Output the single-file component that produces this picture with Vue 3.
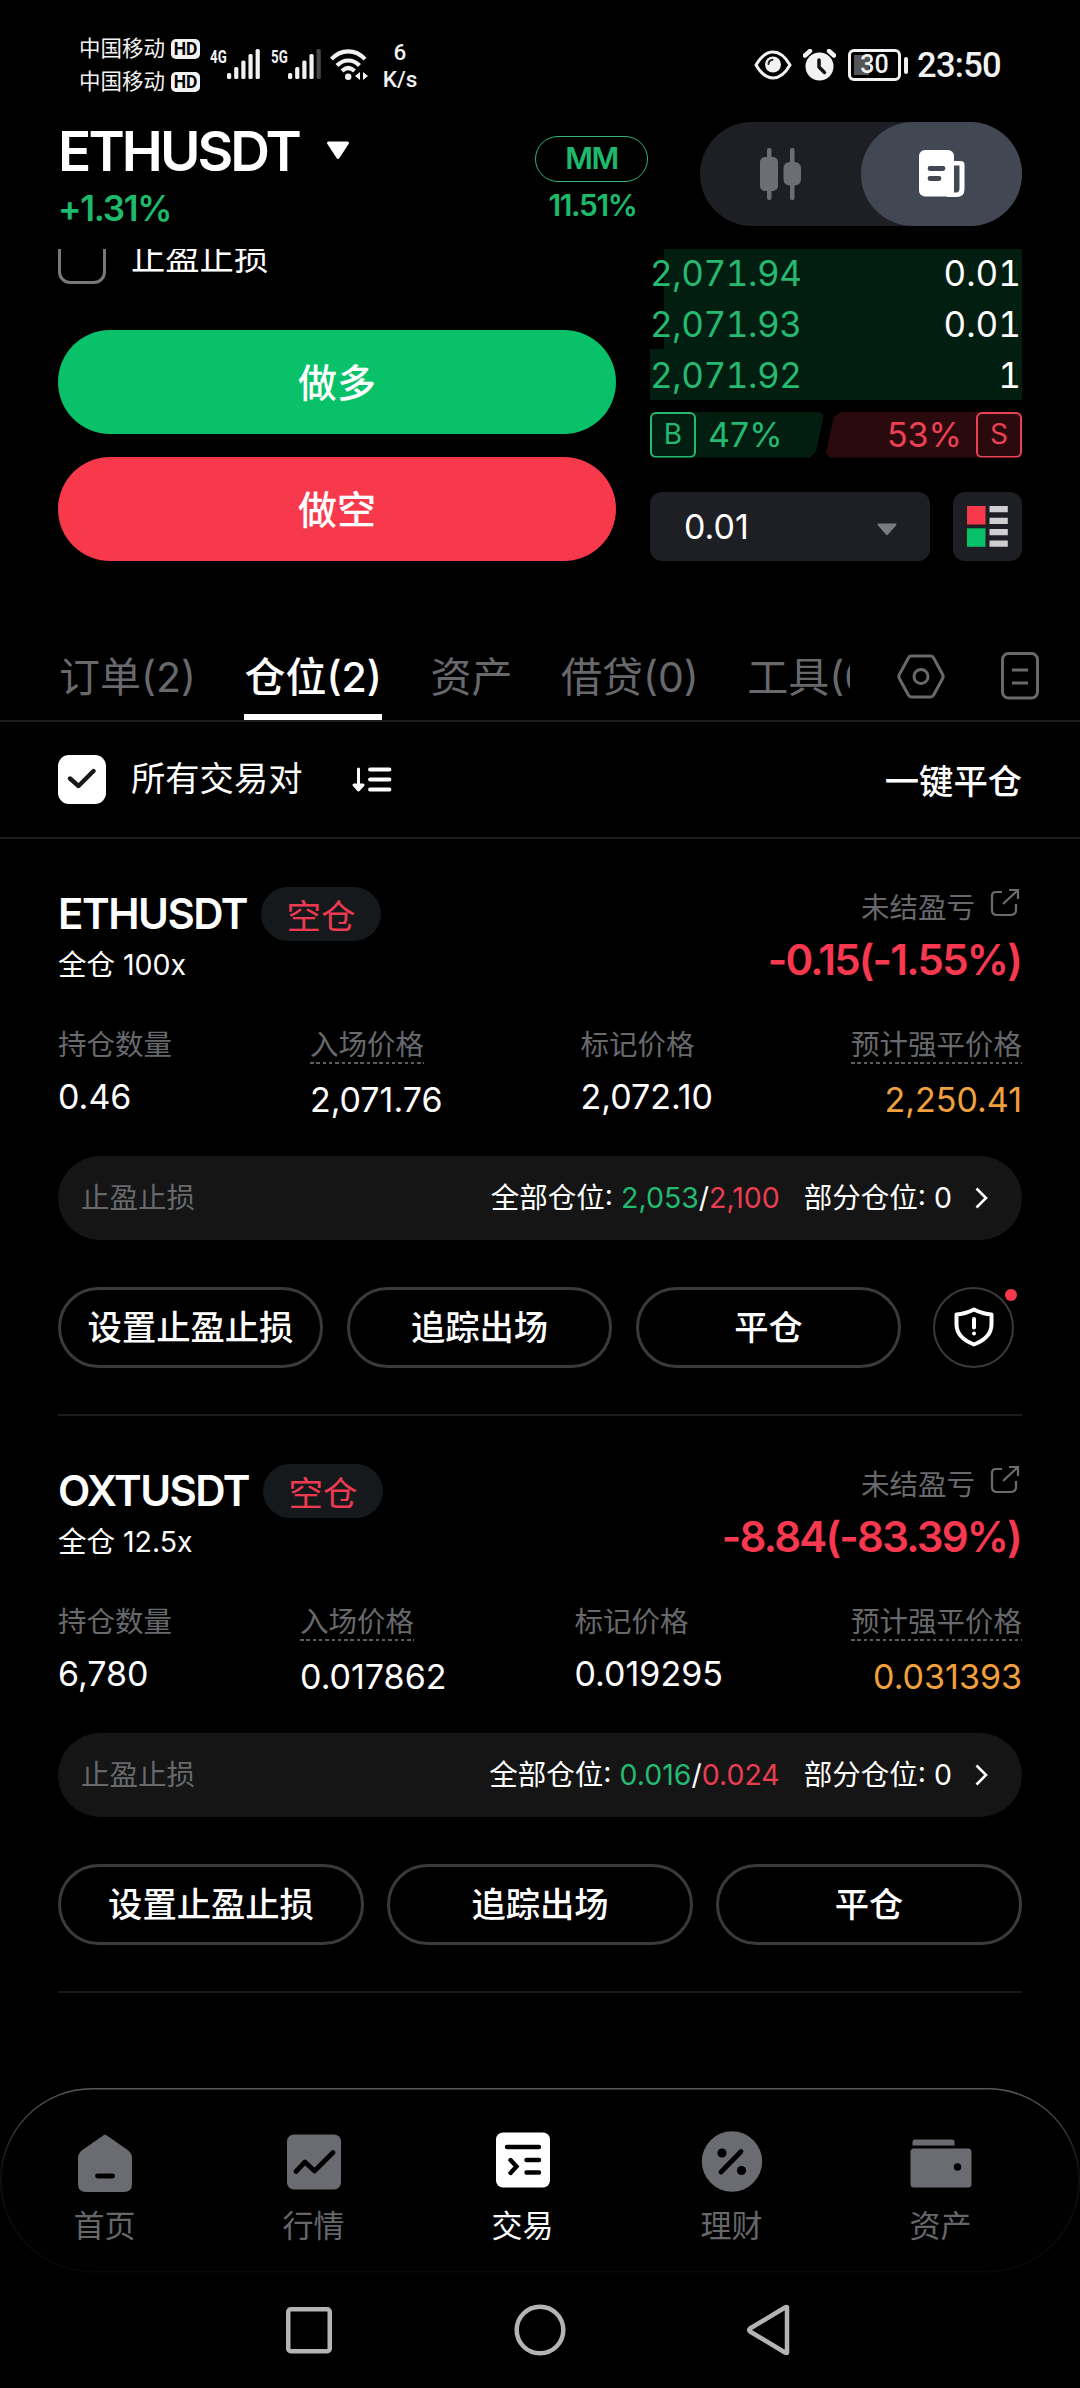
<script setup>
const bars = [6, 12, 18.5, 25, 30]

const bids = [
  { price: '2,071.94', size: '0.01', depth: 96.3 },
  { price: '2,071.93', size: '0.01', depth: 96.3 },
  { price: '2,071.92', size: '1', depth: 100 },
]

const tabs = [
  { label: '订单(2)' },
  { label: '仓位(2)', active: true },
  { label: '资产' },
  { label: '借贷(0)' },
  { label: '工具(0)' },
]

const positions = [
  {
    symbol: 'ETHUSDT', side: '空仓', mode: '全仓 100x', pnl: '-0.15(-1.55%)',
    fields: [
      { label: '持仓数量', value: '0.46' },
      { label: '入场价格', value: '2,071.76', hint: true },
      { label: '标记价格', value: '2,072.10' },
      { label: '预计强平价格', value: '2,250.41', hint: true, end: true },
    ],
    tp: '2,053', sl: '2,100', shield: true,
  },
  {
    symbol: 'OXTUSDT', side: '空仓', mode: '全仓 12.5x', pnl: '-8.84(-83.39%)',
    fields: [
      { label: '持仓数量', value: '6,780' },
      { label: '入场价格', value: '0.017862', hint: true },
      { label: '标记价格', value: '0.019295' },
      { label: '预计强平价格', value: '0.031393', hint: true, end: true },
    ],
    tp: '0.016', sl: '0.024', shield: false,
  },
]

const actions = ['设置止盈止损', '追踪出场', '平仓']

const nav = [
  { id: 'home', label: '首页' },
  { id: 'market', label: '行情' },
  { id: 'trade', label: '交易', active: true },
  { id: 'earn', label: '理财' },
  { id: 'wallet', label: '资产' },
]
</script>

<template>
  <div class="screen">
    <div class="status">
      <div class="carriers">
        <div v-for="n in 2" :key="n" class="carrier"><span>中国移动</span><b class="hd"><i>HD</i></b></div>
      </div>
      <div class="signal">
        <span class="gen"><i>4G</i></span>
        <svg width="34" height="30" viewBox="0 0 34 30">
          <rect v-for="(h, i) in bars" :key="i" :x="i * 7.15" :y="30 - h" width="4.2" :height="h" rx="1.6" fill="#f2f2f2" />
        </svg>
      </div>
      <div class="signal second">
        <span class="gen"><i>5G</i></span>
        <svg width="34" height="30" viewBox="0 0 34 30">
          <rect v-for="(h, i) in bars" :key="i" :x="i * 7.15" :y="30 - h" width="4.2" :height="h" rx="1.6" :fill="i === 4 ? '#484848' : '#f2f2f2'" />
        </svg>
      </div>
      <svg class="wifi" width="39" height="32" viewBox="0 0 39 32" fill="none" stroke="#f2f2f2" stroke-width="4.2">
        <path d="M1.5 10.2C11 -.2 25.500 -.2 35 10.200" />
        <path d="M7 16.500C13.500 9.800 23 9.800 29.500 16.500" />
        <path d="M12 22C16 18.200 20.500 18.200 24.500 22" />
        <circle cx="18.200" cy="27.800" r="3.200" fill="#f2f2f2" stroke="none" />
        <path d="M30 23v8l-5-4zM33 23v8l5-4z" fill="#f2f2f2" stroke="none" />
        <path d="M31.500 22v9" stroke="#000" stroke-width="1" />
      </svg>
      <div class="rate"><span>6</span><span>K/s</span></div>
      <div class="status-right">
        <svg width="38" height="30" viewBox="0 0 38 30" fill="none">
          <path d="M2 15Q9.500 2 19 2T36 15Q28.500 28 19 28T2 15Z" stroke="#f2f2f2" stroke-width="3" />
          <circle cx="19" cy="14.500" r="8" fill="#f2f2f2" />
          <path d="M14.500 14Q14.800 10.200 18.500 9.800" stroke="#222" stroke-width="2" stroke-linecap="round" />
        </svg>
        <svg class="alarm" width="33" height="32" viewBox="0 0 33 32">
          <circle cx="16.500" cy="17.500" r="14" fill="#f2f2f2" />
          <path d="M2 6.500 7 2M31 6.500 26 2" stroke="#f2f2f2" stroke-width="4.500" stroke-linecap="round" />
          <path d="M16 11v7l5.500 5.500" fill="none" stroke="#111" stroke-width="3.500" stroke-linecap="round" stroke-linejoin="round" />
        </svg>
        <div class="battery"><span>30</span></div>
        <div class="battery-cap"></div>
        <span class="clock">23:50</span>
      </div>
    </div>

    <header class="header">
      <div class="pair">
        <div class="pair-name">
          <span>ETHUSDT</span>
          <svg width="24" height="19" viewBox="0 0 24 19"><path d="M2.500 2h19L12 16.500z" fill="#fff" stroke="#fff" stroke-width="3" stroke-linejoin="round" /></svg>
        </div>
        <div class="change">+1.31%</div>
      </div>
      <div class="margin">
        <div class="mm">MM</div>
        <div class="mm-rate">11.51%</div>
      </div>
      <div class="toggle">
        <div class="toggle-item">
          <svg width="42" height="52" viewBox="0 0 42 52" fill="#6d6e73">
            <rect y="9" width="18" height="34" rx="5" /><rect x="7" width="4.500" height="52" rx="2" />
            <rect x="23.500" y="14" width="17.500" height="23.500" rx="6" /><rect x="30" width="4.500" height="52" rx="2" />
          </svg>
        </div>
        <div class="toggle-item on">
          <svg width="46" height="47" viewBox="0 0 46 47">
            <path d="M30 11h11.500q4 0 4 4v24q0 8-8 8H28z" fill="#fff" />
            <path d="M35 15.500h5.500v22q0 5-3 5H35z" fill="#424853" />
            <rect width="35" height="46.500" rx="6" fill="#fff" />
            <path d="M11 18.500h13M11 28.500h9" stroke="#424853" stroke-width="4.800" stroke-linecap="round" />
          </svg>
        </div>
      </div>
    </header>

    <section class="panel">
      <div class="order">
        <div class="tpsl"><span class="box"></span><span>止盈止损</span></div>
        <button class="big long">做多</button>
        <button class="big short">做空</button>
      </div>
      <div class="book">
        <div v-for="b in bids" :key="b.price" class="bid">
          <span class="depth" :style="{ width: b.depth + '%' }"></span>
          <span class="price">{{ b.price }}</span><span class="size">{{ b.size }}</span>
        </div>
        <div class="ratio">
          <div class="buy"><b>B</b><span>47%</span></div>
          <div class="sell"><span>53%</span><b>S</b></div>
        </div>
        <div class="tick-row">
          <div class="tick">
            <span>0.01</span>
            <svg width="20" height="13" viewBox="0 0 20 13"><path d="M1.500 1.500h17L10 11z" fill="#7b7c80" stroke="#7b7c80" stroke-width="2" stroke-linejoin="round" /></svg>
          </div>
          <div class="view">
            <svg width="41" height="41" viewBox="0 0 41 41">
              <path d="M0 0h18.500v18.500H0z" fill="#f8384b" /><path d="M0 22.300h18.500v18.500H0z" fill="#08c168" />
              <path d="M22.500 0h18.300v6.200H22.500zM22.500 11.700h18.300v6.200H22.500zM22.500 23h18.300v6.200H22.500zM22.500 34.500h18.300v6.200H22.500z" fill="#cfcfd1" />
            </svg>
          </div>
        </div>
      </div>
    </section>

    <div class="tabs">
      <div class="tab-scroll">
        <div v-for="t in tabs" :key="t.label" class="tab" :class="{ active: t.active }">{{ t.label }}</div>
      </div>
      <svg class="hex" width="48" height="46" viewBox="0 0 48 46" fill="none" stroke="#68696c" stroke-width="3">
        <path d="M14.500 2h19q2 0 3 1.700l9 16.500q1.300 2.300 0 4.600l-9 16.500q-1 1.700-3 1.700h-19q-2 0-3-1.700l-9-16.500q-1.300-2.300 0-4.600l9-16.500q1-1.700 3-1.700z" />
        <circle cx="24" cy="22.500" r="7" />
      </svg>
      <svg class="list" width="38" height="48" viewBox="0 0 38 48" fill="none" stroke="#68696c" stroke-width="3">
        <rect x="1.500" y="1.500" width="35" height="44.500" rx="6" /><path d="M11 18h16M11 31h16" />
      </svg>
    </div>

    <div class="filter">
      <span class="check">
        <svg width="30" height="22" viewBox="0 0 30 22"><path d="M3 10.500 11.500 18 26.500 3" fill="none" stroke="#17191b" stroke-width="4.400" stroke-linecap="round" stroke-linejoin="round" /></svg>
      </span>
      <span class="filter-text">所有交易对</span>
      <svg class="sort" width="40" height="25" viewBox="0 0 40 25" fill="none" stroke="#fff" stroke-width="3.800" stroke-linecap="round" stroke-linejoin="round">
        <path d="M6.500 2v20M2 18l4.500 5 4.500-5z" fill="#fff" stroke-width="3" /><path d="M18 2.500h19.500M18 12.500h19.500M18 22.500h19.500" />
      </svg>
      <span class="close-all">一键平仓</span>
    </div>

    <section v-for="p in positions" :key="p.symbol" class="card">
      <div class="top">
        <div>
          <div class="name"><span class="symbol">{{ p.symbol }}</span><span class="side">{{ p.side }}</span></div>
          <div class="mode">{{ p.mode }}</div>
        </div>
        <div class="pnl-col">
          <div class="pnl-label">
            <span>未结盈亏</span>
            <svg width="30" height="29" viewBox="0 0 30 29" fill="none" stroke="#6b6c6e" stroke-width="2.200">
              <path d="M12 4H6Q2 4 2 8V22Q2 27 7 27H20Q26 27 26 22V16M19 2H28V11M28 2 13 16" />
            </svg>
          </div>
          <div class="pnl">{{ p.pnl }}</div>
        </div>
      </div>
      <div class="fields">
        <div v-for="f in p.fields" :key="f.label" class="field" :class="{ hint: f.hint, end: f.end }">
          <div class="label">{{ f.label }}</div>
          <div class="value">{{ f.value }}</div>
        </div>
      </div>
      <div class="stops">
        <span class="muted">止盈止损</span>
        <span class="all">全部仓位: <em class="up">{{ p.tp }}</em>/<em class="down">{{ p.sl }}</em></span>
        <span class="part">部分仓位: 0</span>
        <svg width="13" height="22" viewBox="0 0 13 22"><path d="M1.500 1.500 11 11 1.500 20.500" fill="none" stroke="#fff" stroke-width="2.600" /></svg>
      </div>
      <div class="actions" :class="{ shielded: p.shield }">
        <button v-for="a in actions" :key="a">{{ a }}</button>
        <div v-if="p.shield" class="shield">
          <svg width="40" height="40" viewBox="0 0 40 40" fill="none" stroke="#fff" stroke-width="4" stroke-linejoin="round">
            <path d="M20 2.500Q29 7 37.500 7.500V18Q37 31 20 37.500Q3 31 2.500 18V7.500Q11 7 20 2.500Z" />
            <path d="M20 12v8.500M20 26.500v.1" stroke-linecap="round" />
          </svg>
          <i></i>
        </div>
      </div>
    </section>

    <nav class="nav">
      <svg class="nav-frame" width="1080" height="185" viewBox="0 0 1080 185">
        <defs>
          <linearGradient id="edge" x1="0" y1="0" x2="0" y2="185" gradientUnits="userSpaceOnUse">
            <stop offset="0" stop-color="#5a5a5a" /><stop offset=".25" stop-color="#303030" /><stop offset=".45" stop-color="#101010" /><stop offset="1" stop-color="#080808" />
          </linearGradient>
        </defs>
        <rect x=".75" y=".75" width="1078.500" height="183" rx="91.500" fill="#010101" stroke="url(#edge)" stroke-width="1.500" />
      </svg>
      <div v-for="n in nav" :key="n.id" class="nav-item" :class="{ active: n.active }">
        <svg width="62" height="62" viewBox="0 0 62 62" fill="#6a6c71">
          <template v-if="n.id === 'home'">
            <path d="M28.500 5Q31 2.500 33.500 5L53 18.500Q58 22 58 27V53Q58 61 50 61H12Q4 61 4 53V27Q4 22 9 18.500Z" />
            <path d="M23.500 45h15" stroke="#000" stroke-width="4.800" stroke-linecap="round" />
          </template>
          <template v-else-if="n.id === 'market'">
            <rect x="4" y="3.500" width="54" height="55" rx="7" />
            <path d="M13 40.500 22 31l9.500 9L50 21.500" fill="none" stroke="#000" stroke-width="4.800" stroke-linecap="round" stroke-linejoin="round" />
          </template>
          <template v-else-if="n.id === 'trade'">
            <rect x="4" y="1.500" width="54" height="55" rx="7" fill="#fff" />
            <path d="M15 16h32M18.500 29l6 6.500-6 6.500M34.500 29H47M34.500 41.500H47" fill="none" stroke="#000" stroke-width="4.400" stroke-linecap="round" />
          </template>
          <template v-else-if="n.id === 'earn'">
            <circle cx="31" cy="30.500" r="30.200" />
            <path d="M20 41 40 20.500" stroke="#000" stroke-width="4.800" stroke-linecap="round" />
            <circle cx="21" cy="22" r="4.600" fill="#000" /><circle cx="40.500" cy="39.500" r="4.600" fill="#000" />
          </template>
          <template v-else>
            <path d="M2.500 14.500V11q0-2.500 2.500-2.500H42q2.500 0 2.500 2.500v3.500zM4 17.500H58q3.500 0 3.500 3.500V53q0 3.500-3.500 3.500H4Q.5 56.500.5 53V21q0-3.500 3.500-3.500z" />
            <circle cx="47.500" cy="36" r="3.700" fill="#000" />
          </template>
        </svg>
        <span>{{ n.label }}</span>
      </div>
    </nav>

    <div class="system">
      <svg width="46" height="47" viewBox="0 0 46 47"><rect x="2.250" y="2.250" width="41.500" height="42" rx="2.500" /></svg>
      <svg class="mid" width="52" height="52" viewBox="0 0 52 52"><circle cx="26" cy="26" r="23.300" /></svg>
      <svg width="45" height="52" viewBox="0 0 45 52"><path d="M41 3.500v45Q41 49.500 39 48.500L4 27.500Q2.500 26 4 24.500L39 3.500Q41 2.500 41 3.500Z" stroke-linejoin="round" /></svg>
    </div>
  </div>
</template>

<style>
html, body { background: #000; }
</style>

<style scoped>
* { box-sizing: border-box; }
.screen {
  width: 1080px; height: 2388px; overflow: hidden; background: #000; color: #fff;
  font-family: Inter, "Noto Sans CJK SC", sans-serif;
  display: flex; flex-direction: column;
}
svg { display: block; flex: none; }
button { font: inherit; color: inherit; background: none; border: 0; padding: 0; }
i, em { font-style: normal; }

.status { height: 122px; padding: 32px 78px 0 79px; display: flex; align-items: flex-start; color: #f2f2f2; font-family: Roboto, "Noto Sans CJK SC", sans-serif; }
.carrier { display: flex; align-items: center; height: 33px; font-size: 21.500px; line-height: 33px; }
.hd { margin-left: 6px; width: 29px; height: 20px; border-radius: 5px; background: #f2f2f2; color: #000; font-size: 17.500px; font-weight: 700; line-height: 20px; text-align: center; }
.signal { display: flex; margin: 17px 0 0 10px; }
.signal.second { margin-left: 10px; }
.gen { width: 17px; height: 16px; font-size: 19px; font-weight: 700; line-height: 16px; }
.gen i { display: block; transform: scaleX(.7); transform-origin: 0 50%; }
.wifi { margin: 17px 0 0 8px; }
.rate { display: flex; flex-direction: column; width: 40px; margin: 7px 0 0 11px; text-align: center; font-size: 22.500px; line-height: 27px; font-weight: 500; }
.status-right { margin-left: auto; display: flex; align-items: center; height: 32px; margin-top: 17px; }
.alarm { margin-left: 11px; }
.battery { margin-left: 12px; width: 53px; height: 32px; border: 3px solid #f2f2f2; border-radius: 6px; font-size: 25px; line-height: 26px; font-weight: 500; text-align: center; background: linear-gradient(90deg, #555 15px, transparent 15px) 3px 3px / 40px 20px no-repeat; }
.battery { background-origin: padding-box; }
.battery-cap { width: 4px; height: 17px; margin-left: 3px; border-radius: 2px; background: #f2f2f2; }
.clock { margin-left: 9px; width: 85px; font-size: 34.500px; letter-spacing: -.7px; line-height: 32px; font-weight: 500; white-space: nowrap; }

.header { height: 127px; padding: 0 58px; display: flex; flex: none; }
.pair { width: 477px; }
.pair-name { display: flex; align-items: center; height: 58px; font-size: 55px; font-weight: 600; letter-spacing: -2.900px; }
.pair-name svg { margin-left: 27px; }
.change { margin-top: 9px; font-size: 35px; line-height: 38px; font-weight: 600; letter-spacing: -1.300px; color: #1dba6c; }
.margin { width: 113px; padding-top: 14px; text-align: center; color: #1dba6c; }
.mm { height: 46px; border: 1.500px solid #34b377; border-radius: 23px; font-size: 30px; line-height: 43px; font-weight: 600; letter-spacing: -1.500px; }
.mm-rate { margin-top: 5px; font-size: 30px; line-height: 36px; font-weight: 600; letter-spacing: -1.400px; padding-left: 2px; }
.toggle { margin-left: auto; width: 322px; height: 104px; border-radius: 52px; background: #1e1f24; display: flex; }
.toggle-item { flex: 1; display: flex; align-items: center; justify-content: center; }
.toggle-item.on { background: #424853; border-radius: 52px; }

.panel { flex: none; height: 407px; padding: 0 58px; display: flex; overflow: hidden; }
.order { width: 558px; margin-right: 34px; }
.tpsl { margin-top: -13px; height: 48px; display: flex; align-items: center; gap: 25px; font-size: 34.300px; line-height: 40px; }
.tpsl span:last-child { margin-top: -4px; }
.box { width: 48px; height: 48px; border: 3px solid #77787a; border-radius: 12px; }
.big { display: block; width: 558px; height: 104px; border-radius: 52px; font-size: 39px; font-weight: 500; line-height: 106px; }
.long { margin-top: 46px; background: #08c168; }
.short { margin-top: 23px; background: #f8384b; }
.book { width: 372px; margin-top: -2px; }
.bid { position: relative; height: 51px; display: flex; justify-content: space-between; padding: 0 1px 0 0; font-size: 35px; line-height: 52px; font-variant-numeric: tabular-nums; }
.depth { position: absolute; top: 0; right: 0; bottom: 0; background: #021e10; }
.price, .size { position: relative; }
.price { color: #25b972; letter-spacing: -.450px; }
.ratio { margin-top: 12px; height: 46px; display: flex; justify-content: space-between; font-size: 34px; line-height: 46px; }
.ratio > div { display: flex; }
.buy { width: 174px; background: #021e10; color: #25b972; border-radius: 6px; clip-path: polygon(0 0, 97% 0, 100% 6%, 95.500% 86%, 92% 100%, 0 100%); }
.sell { width: 198px; margin-left: -1px; background: #2b0a0d; color: #ea4155; justify-content: flex-end; border-radius: 6px; clip-path: polygon(9% 0, 100% 0, 100% 100%, 3% 100%, 1% 90%, 5% 12%); }
.ratio b { width: 46px; height: 46px; border: 2.500px solid currentColor; border-radius: 6px; font-size: 28px; font-weight: 400; line-height: 40px; text-align: center; }
.buy span { margin-left: 12px; }
.sell span { margin-right: 14px; }
.tick-row { margin-top: 34px; display: flex; justify-content: space-between; }
.tick { width: 280px; height: 69px; border-radius: 12px; background: #1e1f24; display: flex; align-items: center; justify-content: space-between; padding: 0 33px 0 34px; font-size: 34px; }
.tick svg { margin-top: 6px; }
.view { width: 69px; height: 69px; border-radius: 12px; background: #1e1f24; display: flex; align-items: center; justify-content: center; }

.tabs { flex: none; height: 66px; border-bottom: 2px solid #1d1d1e; display: flex; padding-left: 58px; }
.tab-scroll { width: 792px; height: 64px; overflow: hidden; display: flex; gap: 48.500px; padding-left: 1px; color: #68696c; font-size: 41px; line-height: 42px; }
.tab { flex: none; height: 64px; white-space: nowrap; }
.active.tab { color: #fff; font-weight: 500; border-bottom: 6px solid #fff; }
.hex { margin: -2px 0 0 47px; }
.list { margin: -4px 0 0 56px; }

.filter { flex: none; height: 117px; border-bottom: 2px solid #1d1d1e; padding: 0 58px; display: flex; align-items: center; font-size: 34.300px; line-height: 40px; }
.check { width: 48px; height: 49px; border-radius: 11px; background: #fff; display: flex; align-items: center; justify-content: center; }
.filter-text { margin-left: 25px; }
.sort { margin-left: 49px; }
.close-all { margin-left: auto; margin-top: 5px; font-weight: 500; }

.card { flex: none; height: 577px; margin: 0 58px; padding-top: 48px; border-bottom: 2px solid #1b1b1b; }
.top { display: flex; justify-content: space-between; height: 134px; }
.name { display: flex; align-items: center; height: 54px; }
.symbol { font-size: 42px; font-weight: 600; letter-spacing: -1.500px; line-height: 55px; }
.side { margin-left: 14px; width: 120px; height: 54px; border-radius: 27px; background: #16191c; color: #ee3a50; font-size: 34.500px; line-height: 60px; text-align: center; }
.mode { margin-top: 4px; font-size: 28.500px; line-height: 39px; }
.pnl-col { text-align: right; }
.pnl-label { height: 34px; display: flex; justify-content: flex-end; color: #68696c; font-size: 28.500px; line-height: 42px; padding-right: 2px; }
.pnl-label svg { margin: 1px 0 0 15px; }
.pnl { margin-top: 14px; font-size: 42px; letter-spacing: -1.800px; line-height: 50px; font-weight: 600; color: #f8384f; padding-right: 1px; }
.fields { display: flex; justify-content: space-between; height: 135px; }
.label { width: fit-content; height: 43px; font-size: 28.500px; line-height: 48px; color: #68696c; }
.value { font-size: 34px; line-height: 40px; margin-top: 13px; }
.hint .label { background: repeating-linear-gradient(90deg, #5c5d5f 0 3.500px, transparent 3.500px 6.300px) 0 100% / 100% 2px no-repeat; }
.hint .value { margin-top: 16px; }
.end .value { color: #f0a03c; text-align: right; }
.stops { height: 84px; border-radius: 42px; background: #151515; display: flex; align-items: center; padding: 0 34px 0 23px; font-size: 28.500px; line-height: 40px; white-space: pre; }
.muted { color: #68696c; }
.all { margin-left: auto; }
.up { color: #23ba71; }
.down { color: #ea3d52; }
.part { margin: 0 23px 0 24px; }
.actions { margin-top: 47px; display: flex; gap: 23px; }
.actions button { flex: 1; height: 81px; border: 3px solid #3a3a3a; border-radius: 41px; font-size: 34.300px; font-weight: 500; line-height: 76px; }
.actions.shielded { gap: 24px; }
.actions.shielded button { flex: none; width: 265px; }
.shield { position: relative; margin-left: 8px; width: 81px; height: 81px; border: 2.500px solid #3a3a3a; border-radius: 50%; display: flex; align-items: center; justify-content: center; }
.shield i { position: absolute; right: -5px; top: 0; width: 12px; height: 12px; border-radius: 50%; background: #f8384b; }

.nav { position: relative; flex: none; height: 185px; margin-top: 95px; padding-right: 35px; display: flex; }
.nav-frame { position: absolute; left: 0; top: 0; }
.nav-item { position: relative; flex: 1; display: flex; flex-direction: column; align-items: center; padding-top: 43px; color: #66676b; font-size: 31px; line-height: 40px; }
.nav-item span { margin-top: 13px; }
.nav-item.active { color: #fff; }
.system { height: 116px; display: flex; align-items: center; padding-left: 286px; }
.system svg { fill: none; stroke: #b4b4b4; stroke-width: 4.500px; }
.system .mid { margin: 0 180px 0 182px; }
</style>
